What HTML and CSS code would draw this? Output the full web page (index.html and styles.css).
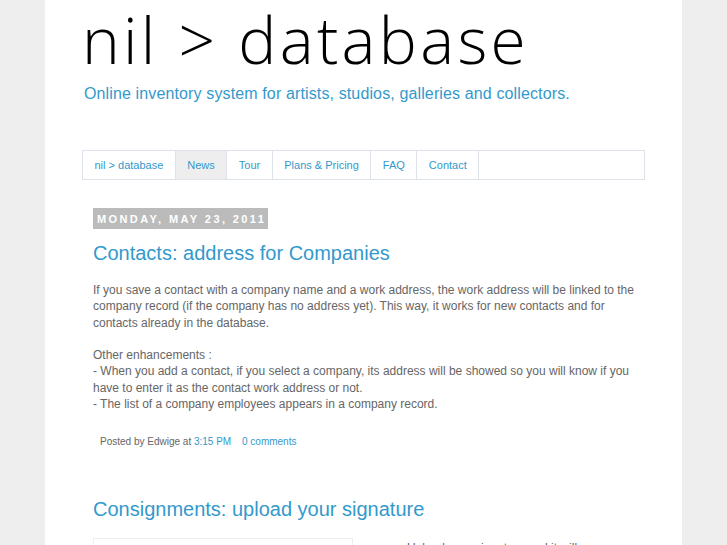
FILE: index.html
```html
<!DOCTYPE html>
<html>
<head>
<meta charset="utf-8">
<link rel="stylesheet" href="styles.css">
</head>
<body>
<div class="page">
  <header class="header">
    <h1 class="site-title">nil &gt; database</h1>
    <p class="tagline">Online inventory system for artists, studios, galleries and collectors.</p>
  </header>
  <nav class="nav">
    <a class="nav-item">nil &gt; database</a>
    <a class="nav-item active">News</a>
    <a class="nav-item">Tour</a>
    <a class="nav-item">Plans &amp; Pricing</a>
    <a class="nav-item">FAQ</a>
    <a class="nav-item">Contact</a>
  </nav>
  <main class="main">
    <div class="date-header">Monday, May 23, 2011</div>
    <article class="post">
      <h2 class="post-title">Contacts: address for Companies</h2>
      <div class="post-body">
        If you save a contact with a company name and a work address, the work address will be linked to the company record (if the company has no address yet). This way, it works for new contacts and for contacts already in the database.<br><br>
        Other enhancements :<br>
        - When you add a contact, if you select a company, its address will be showed so you will know if you have to enter it as the contact work address or not.<br>
        - The list of a company employees appears in a company record.
      </div>
      <div class="post-footer">Posted by Edwige at <a>3:15 PM</a> <a class="comments">0 comments</a></div>
    </article>
    <article class="post second">
      <h2 class="post-title">Consignments: upload your signature</h2>
      <div class="post-row">
        <div class="image-box"></div>
        <div class="post-body side">Upload your signature and it will appear on</div>
      </div>
    </article>
  </main>
</div>
</body>
</html>
```
FILE: styles.css
```css
html, body {
  margin: 0;
  padding: 0;
  background: #eeeeee;
  overflow: hidden;
}
body {
  font-family: "Liberation Sans", Arial, sans-serif;
}
.page {
  width: 637px;
  margin-left: 45px;
  background: #ffffff;
  height: 545px;
  overflow: hidden;
  box-sizing: border-box;
  padding: 0 37px;
}
.header {
  padding-top: 0;
}
.site-title {
  margin: -4px 0 0;
  font-family: "Open Sans", sans-serif;
  font-weight: 300;
  font-size: 64px;
  line-height: 88px;
  color: #000;
  letter-spacing: 3.3px;
}
.tagline {
  margin: 0 0 0 2px;
  font-size: 16px;
  line-height: 20px;
  letter-spacing: 0.13px;
  color: #3399cc;
}
.nav {
  margin-top: 46px;
  display: flex;
  border: 1px solid #dde3e8;
  height: 28px;
}
.nav-item {
  display: block;
  padding: 0 11.5px;
  font-size: 11px;
  line-height: 28px;
  color: #3399cc;
  border-right: 1px solid #dde3e8;
}
.nav-item.active {
  background: #eeeeee;
}
.main {
  padding: 28px 11px 0;
}
.date-header {
  width: fit-content;
  background: #bbbbbb;
  color: #ffffff;
  font-size: 11px;
  font-weight: bold;
  letter-spacing: 2.4px;
  text-transform: uppercase;
  padding: 4px 2px 3px 4px;
  line-height: 14px;
}
.post-title {
  margin: 11px 0 0;
  font-weight: normal;
  font-size: 20px;
  line-height: 26px;
  color: #3399cc;
}
.post-body {
  margin-top: 16px;
  font-size: 12px;
  line-height: 16.3px;
  color: #666666;
}
.post-footer {
  margin: 23px 0 0 7px;
  font-size: 10px;
  line-height: 14px;
  color: #666666;
}
.post-footer a {
  color: #3399cc;
}
.post-footer .comments {
  margin-left: 8px;
}
.second {
  margin-top: 47px;
}
.post-row {
  display: flex;
  gap: 54px;
  margin-top: 16px;
}
.image-box {
  width: 258px;
  height: 60px;
  border: 1px solid #eeeeee;
  flex: none;
}
.post-body.side {
  margin-top: 2px;
}
```
